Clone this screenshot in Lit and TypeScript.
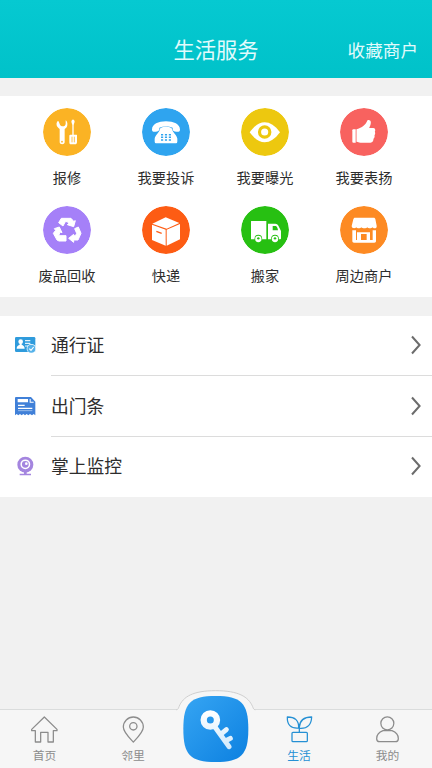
import { LitElement, css, html, svg, TemplateResult } from "lit";
import { customElement } from "lit/decorators.js";
import { classMap } from "lit/directives/class-map.js";

interface Service {
  label: string;
  color: string;
  glyph: TemplateResult;
}

// Service glyphs are drawn on a 144 x 144 grid, white on a coloured disc.
const services: Service[] = [
  {
    label: "报修",
    color: "#fbb324",
    glyph: svg`
      <path d="M45 38c-5 4-6 12-2 18 2 3 5 5 7 7v40c0 8 15 8 15 0V63c4-2 8-6 8-12 1-6-1-11-5-14v11c-1 5-4 7-8 7-5 0-9-2-10-7-1-4-3-8-5-10z"/>
      <circle cx="57" cy="101" r="2.6" fill="#fbb324"/>
      <path d="M87 35h6l2 6-3 10v29h8c2 0 2 1 2 3v19c0 5-2 7-6 7H84c-4 0-5-2-5-7V83c0-2 1-3 3-3h6V51l-3-10z"/>
      <path d="M87 86v17M94 86v17" stroke="#fbb324" stroke-width="2.4"/>`,
  },
  {
    label: "我要投诉",
    color: "#2fa4ef",
    glyph: svg`
      <path d="M30 65c0-17 19-25 42-25s42 8 42 25c0 6-6 7-11 6-7 0-11-2-11-8v-4c-12-5-28-5-40 0v4c0 6-5 8-11 8-5 1-11 0-11-6z"/>
      <path d="M53 65c1-7 11-9 19-9s18 2 19 9c1 8 14 16 15 27v8c0 5-2 6-6 6H44c-4 0-6-1-6-6v-8c1-11 14-19 15-27z"/>
      <path d="M57 80h30M57 88h30M57 96h30" stroke="#2fa4ef" stroke-width="4.5" stroke-dasharray="6.5 5.2"/>`,
  },
  {
    label: "我要曝光",
    color: "#edc80f",
    glyph: svg`
      <path d="M26 73c15-20 29-30 45-30s31 10 46 30c-15 20-30 30-46 30S41 93 26 73z"/>
      <circle cx="71" cy="72" r="15.5" fill="none" stroke="#edc80f" stroke-width="9.5"/>`,
  },
  {
    label: "我要表扬",
    color: "#f8625f",
    glyph: svg`
      <path d="M40 64h7v40h-7c-2 0-3-1-3-3V67c0-2 1-3 3-3z"/>
      <path d="M49.5 64c14-4 27-11 33-27 4-2 10 0 10 6 0 8-3 12-5 17h12c6 0 8 6 5 11 2 4 1 8-1 11 1 4 0 8-3 10 0 7-3 11-9 12H67c-8 0-12-2-17.500-3z"/>`,
  },
  {
    label: "废品回收",
    color: "#a580f8",
    glyph: svg`
      <g stroke="#fff" stroke-width="3" stroke-linejoin="round">
        <path d="M47 50l8-13h29l8 9 5-2-5 18-19-6 4-4-4-5h-6l-7 13z"/>
        <path d="M95 68l11-5 8 19-9 20H92v7L77 97l15-12v5l6-2 3-6z"/>
        <path d="M34 68l15-5 8 17-6-2-4 11h22v16H48l-6-3-11-20 7-9z"/>
      </g>`,
  },
  {
    label: "快递",
    color: "#fd5c14",
    glyph: svg`
      <path d="M71 34l41 17-38 17-43-15z"/>
      <path d="M30 56l41 15v48L30 102z"/>
      <path d="M114 54v46l-40 19V71z"/>
      <path d="M43 76l16 6" stroke="#fd5c14" stroke-width="4"/>`,
  },
  {
    label: "搬家",
    color: "#27c012",
    glyph: svg`
      <path d="M31 45h45v55H30V46z"/>
      <path d="M81 53h22c5 0 8 3 10 8l7 14v22c0 2-1 3-4 3H81z"/>
      <path d="M95 60h9c4 0 6 7 7 13H95z" fill="#27c012"/>
      <circle cx="52" cy="98" r="11.5" fill="#27c012"/><circle cx="102" cy="98" r="11.5" fill="#27c012"/>
      <circle cx="52" cy="99" r="9.5"/><circle cx="102" cy="99" r="9.5"/>
      <circle cx="52" cy="97" r="3.6" fill="#27c012"/><circle cx="102" cy="97" r="3.6" fill="#27c012"/>`,
  },
  {
    label: "周边商户",
    color: "#fd8a23",
    glyph: svg`
      <path d="M45 35h56c2 0 4 1 5 4l4 20c1 5-2 8-6 8-4 0-6-2-7-3-2 4-12 4-15 0-3 4-15 4-18 0-3 4-13 4-15 0-3 4-14 4-14-4l5-20c1-3 2-5 5-5z"/>
      <path d="M37 73h11v29h50V73h10v32c0 3-2 5-5 5H42c-3 0-5-2-5-5z"/>
      <path d="M51 79h39v25H80V84H63v20H51z"/>`,
  },
];

const entries = [
  {
    label: "通行证",
    icon: svg`
      <rect x="0" y="3" width="61" height="45" rx="4" fill="#2f9bdc"/>
      <circle cx="17" cy="17" r="7" fill="#fff"/>
      <path d="M5 38c0-8 5-10 9-12l0-4h6v4c4 2 9 4 9 12z" fill="#fff"/>
      <path d="M30 14h16M30 22h16M30 30h8" stroke="#e3f3fd" stroke-width="3.4"/>
      <circle cx="49" cy="38" r="14" fill="#fff"/>
      <circle cx="49" cy="38" r="12" fill="#55b2ea"/>
      <path d="M43 38l5 5 8-10" fill="none" stroke="#fff" stroke-width="3.4"/>`,
  },
  {
    label: "出门条",
    icon: svg`
      <path d="M0 3c0-2 1-3 3-3h45l13 14v41l-5-4-5 4-6-4-5 4-5-4-5 4-5-4-5 4-5-4-5 4-5-4-5 4z" fill="#4080d8"/>
      <path d="M8 6h31v10H8zM44 6v11h12v-3h-9V6z" fill="#fff"/>
      <path d="M9 25h20M9 34h43" stroke="#fff" stroke-width="3.4"/>
      <path d="M9 41h43" stroke="#c4d9f5" stroke-width="2"/>`,
  },
  {
    label: "掌上监控",
    icon: svg`
      <circle cx="31" cy="23" r="24" fill="#a485df"/>
      <circle cx="31" cy="22" r="12.5" fill="none" stroke="#fff" stroke-width="4.5"/>
      <circle cx="34" cy="20" r="4" fill="#fff"/>
      <path d="M27 43h8v7h13v5H14v-5h13z" fill="#a485df"/>`,
  },
];

const tabs = [
  {
    label: "首页",
    active: false,
    icon: svg`<path d="M40 3L2 40v4h11v34h16V49h22v29h16V44h11v-4z"/>`,
  },
  {
    label: "邻里",
    active: false,
    icon: svg`<path d="M40 78C25 62 10 48 10 33a30 30 0 0 1 60 0c0 15-15 29-30 45z"/><circle cx="40" cy="31" r="11"/>`,
  },
  null,
  {
    label: "生活",
    active: true,
    icon: svg`<path d="M40 48V34M38 36C14 38 3 26 4 3c23 0 35 10 34 33zM40 34C41 12 54 3 77 3c-1 22-11 36-37 34z"/><rect x="18" y="49" width="46" height="28" rx="3"/>`,
  },
  {
    label: "我的",
    active: false,
    icon: svg`<circle cx="40" cy="22" r="19.5"/><path d="M27 44h27c11 4 19 14 19 24 0 7-3 9-9 9H17c-6 0-9-2-9-9 0-10 8-20 19-24z"/>`,
  },
];

@customElement("app-root")
export class AppRoot extends LitElement {
  static styles = css`
    :host {
      display: flex;
      flex-direction: column;
      box-sizing: border-box;
      height: 768px;
      overflow: hidden;
      background: #f1f1f1;
      color: #2d2d2d;
      font-family: "Noto Sans CJK SC", sans-serif;
    }
    svg {
      display: block;
    }
    .header {
      display: grid;
      grid-template-columns: 1fr auto 1fr;
      align-items: center;
      flex: none;
      height: 78px;
      box-sizing: border-box;
      padding: 20px 14px 0;
      background: linear-gradient(#06c9d1, #00c2c9);
      color: #e2fbfc;
    }
    .title {
      grid-column: 2;
      font-size: 21.3px;
      line-height: 32px;
    }
    .action {
      justify-self: end;
      font-size: 17.6px;
      line-height: 28px;
      padding-top: 2px;
    }
    .services {
      display: grid;
      flex: none;
      grid-template-columns: repeat(4, 99px);
      grid-auto-rows: 98px;
      margin-top: 18px;
      height: 201px;
      box-sizing: border-box;
      padding: 12px 0 0 17.5px;
      background: #fff;
    }
    .service {
      display: flex;
      flex-direction: column;
      align-items: center;
    }
    .disc {
      width: 48px;
      height: 48px;
      border-radius: 50%;
      fill: #fff;
    }
    .name {
      margin-top: 10px;
      font-size: 14.2px;
      line-height: 22px;
    }
    .entries {
      flex: none;
      margin-top: 18.5px;
      background: #fff;
    }
    .entry {
      display: flex;
      align-items: center;
      height: 60.5px;
      padding-left: 15px;
    }
    .entry-icon {
      width: 21px;
      height: 19px;
      overflow: visible;
    }
    .entry-body {
      display: flex;
      flex: 1;
      align-items: center;
      justify-content: space-between;
      height: 100%;
      box-sizing: border-box;
      margin-left: 15px;
      padding-right: 11px;
      border-bottom: 1px solid #dcdcdc;
      font-size: 17.8px;
    }
    .entry-label {
      padding-bottom: 2px;
    }
    .entry:last-child .entry-body {
      border-bottom-color: transparent;
    }
    .chevron {
      width: 10px;
      height: 20px;
      fill: none;
      stroke: #6c6c6c;
      stroke-width: 2;
    }
    .tabs {
      position: relative;
      display: grid;
      grid-template-columns: 89px 88px 78px 88px 89px;
      flex: none;
      height: 59px;
      box-sizing: border-box;
      margin-top: auto;
      border-top: 1px solid #dadcdc;
      background: #f6f6f6;
    }
    .tab {
      display: flex;
      flex-direction: column;
      align-items: center;
      padding-top: 6px;
      color: #8c8c8c;
      font-size: 11.8px;
      line-height: 18px;
    }
    .tab.active {
      color: #2590d4;
    }
    .tab-icon {
      width: 27px;
      height: 27px;
      margin-bottom: 3px;
      fill: none;
      stroke: currentColor;
      stroke-width: 3.8;
      stroke-linejoin: round;
    }
    .key {
      position: absolute;
      left: 165px;
      bottom: 0;
      width: 100px;
      height: 88px;
    }
  `;

  render() {
    return html`
      <header class="header">
        <div class="title">生活服务</div>
        <div class="action">收藏商户</div>
      </header>
      <section class="services">
        ${services.map(
          (s) => html`<div class="service">
            <svg class="disc" viewBox="0 0 144 144">
              <circle cx="72" cy="72" r="72" fill=${s.color} />
              ${s.glyph}
            </svg>
            <div class="name">${s.label}</div>
          </div>`
        )}
      </section>
      <section class="entries">
        ${entries.map(
          (e) => html`<div class="entry">
            <svg class="entry-icon" viewBox="0 0 63 57">${e.icon}</svg>
            <div class="entry-body">
              <span class="entry-label">${e.label}</span>
              <svg class="chevron" viewBox="0 0 10 20"><path d="M1 1.5l7.6 8.5L1 18.5" /></svg>
            </div>
          </div>`
        )}
      </section>
      <nav class="tabs">
        ${tabs.map((t) =>
          t
            ? html`<div class=${classMap({ tab: true, active: t.active })}>
                <svg class="tab-icon" viewBox="0 0 81 81">${t.icon}</svg>
                <span>${t.label}</span>
              </div>`
            : html`<div></div>`
        )}
        <svg class="key" viewBox="0 0 300 264">
          <defs>
            <linearGradient id="face" x1="0" y1="0" x2="1" y2="1">
              <stop offset="0" stop-color="#36a5f3" />
              <stop offset="1" stop-color="#0c80e0" />
            </linearGradient>
            <linearGradient id="metal" gradientUnits="userSpaceOnUse" x1="0" y1="95" x2="0" y2="205">
              <stop offset="0" stop-color="#fff" />
              <stop offset="1" stop-color="#d2eafc" />
            </linearGradient>
          </defs>
          <path d="M36 94V90C46 55 76 32 152 32S258 55 268 90v4z" fill="#f6f6f6" />
          <path d="M34 89.5C39 89 40 85 42 80 54 50 84 32 152 32s98 18 111 48c2 5 3 9 8 9.5" fill="none" stroke="#cfcfcf" stroke-width="3" />
          <path d="M152 48c76 0 98 21 98 99s-22 99-98 99-97-21-97-99 21-99 97-99z" fill="url(#face)" />
          <g fill="none" stroke="url(#metal)" stroke-linecap="round">
            <circle cx="136" cy="120" r="20" stroke-width="19" />
            <path d="M150 141L192 200M167 163l17-14M181 183l15-8" stroke-width="15" />
          </g>
        </svg>
      </nav>
    `;
  }
}
